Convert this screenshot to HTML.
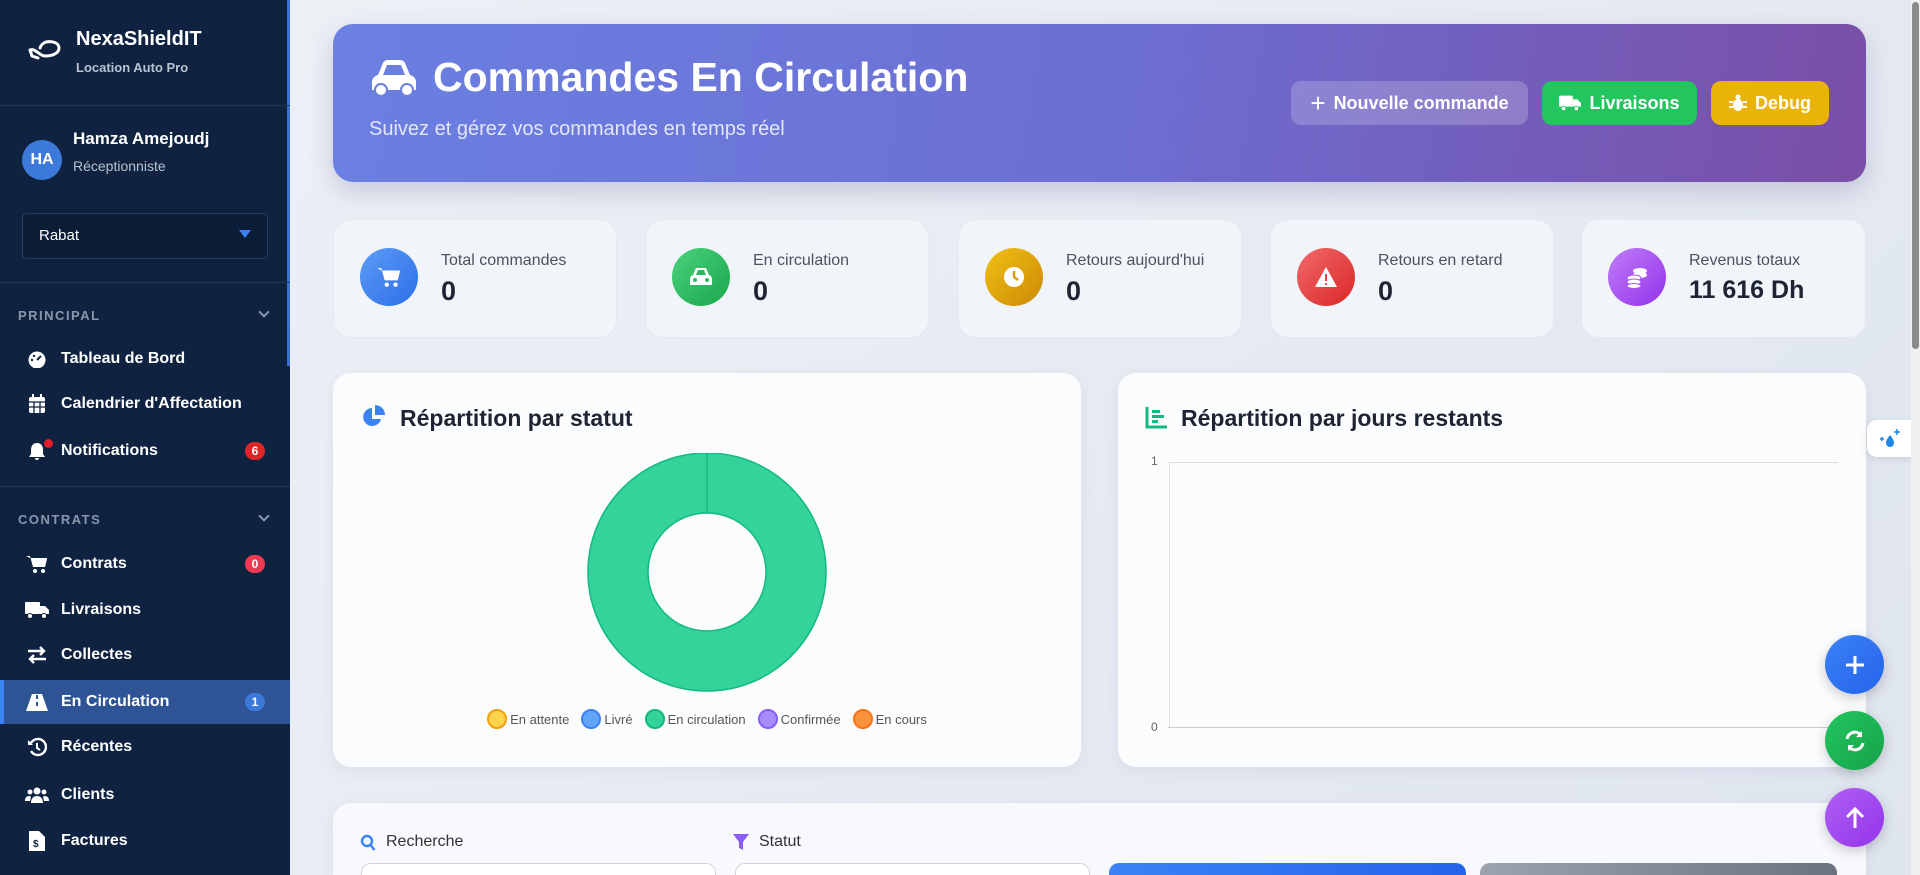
<!DOCTYPE html>
<html style="width:1920px;height:875px;overflow:hidden"><head><meta charset="utf-8"><style>
*{box-sizing:border-box;margin:0;padding:0}
body{width:1920px;height:875px;overflow:hidden;font-family:"Liberation Sans",sans-serif;background:linear-gradient(135deg,#eef1f6,#dfe5ef);position:relative}
.sb{position:absolute;left:0;top:0;width:290px;height:875px;background:#0f2341;color:#fff}
.sb .thumb{position:absolute;right:0;top:0;width:3px;height:366px;background:#3b6fd0}
.hr{position:absolute;left:0;width:290px;height:1px;background:#1f3657}
.abs{position:absolute}
.it{position:absolute;left:0;width:290px;height:44px;display:flex;align-items:center;font-size:16px;font-weight:bold}
.it .ic{width:24px;margin-left:25px;margin-right:12px;display:flex;justify-content:center}
.it.act{background:#2f5496;border-left:4px solid #3b82f6}
.badge{position:absolute;right:25px;height:18px;min-width:20px;border-radius:9px;font-size:12px;display:flex;align-items:center;justify-content:center;padding:0 6px}
.sec{position:absolute;left:18px;font-size:13px;font-weight:bold;letter-spacing:1.5px;color:#8a97aa}
.chev{position:absolute;right:22px;width:8px;height:8px;border-right:2px solid #8a97aa;border-bottom:2px solid #8a97aa;transform:rotate(45deg)}
.card{position:absolute;background:#f1f4f9;border-radius:18px;border:1px solid #e4e9f1}
.stat .circ{position:absolute;left:26px;top:28px;width:58px;height:58px;border-radius:50%;display:flex;align-items:center;justify-content:center}
.stat .lbl{position:absolute;left:107px;top:32px;font-size:16px;color:#4a5261}
.stat .val{position:absolute;left:107px;top:56px;font-size:27px;font-weight:bold;color:#1d2433}
.btn{position:absolute;top:81px;height:44px;border-radius:10px;color:#fff;font-size:18px;font-weight:bold;display:flex;align-items:center;justify-content:center;gap:8px}
.wc{position:absolute;background:#fbfcfe;border-radius:18px;box-shadow:0 4px 14px rgba(30,50,90,.06)}
.fab{position:absolute;left:1825px;width:59px;height:59px;border-radius:50%;display:flex;align-items:center;justify-content:center;box-shadow:0 4px 12px rgba(0,0,0,.2)}
.lg{display:inline-flex;align-items:center;gap:3px;margin:0 6px;font-size:13px;color:#555}
.lg i{display:inline-block;width:20px;height:20px;border-radius:50%;border:2px solid}
</style></head><body>
<div class="sb">
  <div class="thumb"></div>
  <svg class="abs" style="left:27px;top:36px" width="36" height="28" viewBox="0 0 36 28"><path d="M3 14c6-2 9 6 15 6s14-2 14-8-8-7-13-6c-3 1-5 3-6 6" fill="none" stroke="#fff" stroke-width="3" stroke-linecap="round"/><path d="M3 14l2 6 6 2" fill="none" stroke="#fff" stroke-width="3" stroke-linecap="round"/></svg>
  <div class="abs" style="left:76px;top:28px;font-size:20px;font-weight:bold">NexaShieldIT</div>
  <div class="abs" style="left:76px;top:60px;font-size:13px;font-weight:bold;color:#b8c2d0">Location Auto Pro</div>
  <div class="hr" style="top:105px"></div>
  <div class="abs" style="left:22px;top:140px;width:40px;height:40px;border-radius:50%;background:#3b7ad8;font-size:16px;font-weight:bold;display:flex;align-items:center;justify-content:center">HA</div>
  <div class="abs" style="left:73px;top:129px;font-size:17px;font-weight:bold">Hamza Amejoudj</div>
  <div class="abs" style="left:73px;top:158px;font-size:14px;color:#b8c2d0">Réceptionniste</div>
  <div class="abs" style="left:22px;top:213px;width:246px;height:46px;border:1px solid #2a3e5c;border-radius:5px;background:#0c1d37;font-size:15px;padding:13px 16px">Rabat<span style="position:absolute;right:16px;top:16px;border-left:6px solid transparent;border-right:6px solid transparent;border-top:8px solid #3b82f6"></span></div>
  <div class="hr" style="top:282px"></div>
  <div class="sec" style="top:308px">PRINCIPAL</div><div class="chev" style="top:308px"></div>
  <div class="it" style="top:337px"><span class="ic"><svg width="20" height="18" viewBox="0 0 20 18"><circle cx="10" cy="10" r="8.5" fill="#fff"/><path d="M10 10l4-4" stroke="#0f2341" stroke-width="2"/><circle cx="5" cy="10" r="1.2" fill="#0f2341"/><circle cx="7" cy="6" r="1.2" fill="#0f2341"/></svg></span>Tableau de Bord</div>
  <div class="it" style="top:382px"><span class="ic"><svg width="18" height="20" viewBox="0 0 18 20"><rect x="1" y="3" width="16" height="16" rx="2" fill="#fff"/><rect x="4" y="0" width="2" height="5" fill="#fff"/><rect x="12" y="0" width="2" height="5" fill="#fff"/><path d="M1 8h16M1 13h16M6 8v11M12 8v11" stroke="#0f2341" stroke-width="1.3"/></svg></span>Calendrier d'Affectation</div>
  <div class="it" style="top:429px"><span class="ic" style="position:relative"><svg width="20" height="20" viewBox="0 0 20 20"><path d="M10 2c4 0 6 3 6 7v4l2 3H2l2-3V9c0-4 2-7 6-7zM8 17h4a2 2 0 01-4 0z" fill="#fff"/></svg><span style="position:absolute;right:-4px;top:-2px;width:9px;height:9px;border-radius:50%;background:#e11d2a"></span></span>Notifications<span class="badge" style="background:#dc2626">6</span></div>
  <div class="hr" style="top:486px"></div>
  <div class="sec" style="top:512px">CONTRATS</div><div class="chev" style="top:512px"></div>
  <div class="it" style="top:542px"><span class="ic"><svg width="22" height="20" viewBox="0 0 22 20"><path d="M0 2h4l3 11h12l2-8H6" fill="#fff"/><path d="M5 4h16l-2 9H8z" fill="#fff"/><circle cx="9" cy="17" r="2" fill="#fff"/><circle cx="17" cy="17" r="2" fill="#fff"/></svg></span>Contrats<span class="badge" style="background:#ef3b52">0</span></div>
  <div class="it" style="top:588px"><span class="ic"><svg width="24" height="18" viewBox="0 0 24 18"><rect x="0" y="1" width="15" height="12" rx="1" fill="#fff"/><path d="M15 5h5l4 4v4h-9z" fill="#fff"/><circle cx="5" cy="15" r="2.5" fill="#fff" stroke="#0f2341"/><circle cx="19" cy="15" r="2.5" fill="#fff" stroke="#0f2341"/></svg></span>Livraisons</div>
  <div class="it" style="top:633px"><span class="ic"><svg width="22" height="18" viewBox="0 0 22 18"><path d="M2 5h16M14 1l4 4-4 4M20 13H4M8 9l-4 4 4 4" stroke="#fff" stroke-width="2.4" fill="none"/></svg></span>Collectes</div>
  <div class="it act" style="top:680px"><span class="ic" style="margin-left:21px"><svg width="22" height="18" viewBox="0 0 22 18"><path d="M6 1h10l6 17H0z" fill="#fff"/><rect x="10" y="2" width="2" height="4" fill="#2f5496"/><rect x="10" y="9" width="2" height="4" fill="#2f5496"/></svg></span>En Circulation<span class="badge" style="background:#3b7ad8">1</span></div>
  <div class="it" style="top:725px"><span class="ic"><svg width="20" height="20" viewBox="0 0 20 20"><path d="M4 6a8 8 0 110 8" fill="none" stroke="#fff" stroke-width="2.4"/><path d="M1 3v5h5z" fill="#fff"/><path d="M10 6v5l3 2" stroke="#fff" stroke-width="2" fill="none"/></svg></span>Récentes</div>
  <div class="it" style="top:773px"><span class="ic"><svg width="24" height="18" viewBox="0 0 24 18"><circle cx="12" cy="5" r="3.5" fill="#fff"/><circle cx="5" cy="6" r="2.5" fill="#fff"/><circle cx="19" cy="6" r="2.5" fill="#fff"/><path d="M6 17c0-5 3-7 6-7s6 2 6 7zM0 15c0-4 2-5 5-5l1 1-1 4zM24 15c0-4-2-5-5-5l-1 1 1 4z" fill="#fff"/></svg></span>Clients</div>
  <div class="it" style="top:819px"><span class="ic"><svg width="16" height="20" viewBox="0 0 16 20"><path d="M0 0h10l6 6v14H0z" fill="#fff"/><text x="4" y="16" font-size="10" font-weight="bold" fill="#0f2341" font-family="Liberation Sans">$</text></svg></span>Factures</div>
</div>

<div class="abs" style="left:333px;top:24px;width:1533px;height:158px;border-radius:20px;background:linear-gradient(100deg,#6b80e2 0%,#6c6fd3 50%,#7a4ea6 100%);box-shadow:0 10px 25px rgba(60,60,120,.2)">
  <svg class="abs" style="left:35px;top:35px" width="52" height="40" viewBox="0 0 52 40"><path d="M10 16l5-12c1-2 3-3 5-3h12c2 0 4 1 5 3l5 12c4 1 6 4 6 7v8H4v-8c0-3 2-6 6-7z" fill="#fff"/><path d="M15 16l4-10h14l4 10z" fill="#6b7fe0"/><circle cx="13" cy="31" r="6" fill="#fff" stroke="#6b7fe0" stroke-width="2"/><circle cx="39" cy="31" r="6" fill="#fff" stroke="#6b7fe0" stroke-width="2"/></svg>
  <div class="abs" style="left:100px;top:30px;font-size:41px;font-weight:bold;color:#fff">Commandes En Circulation</div>
  <div class="abs" style="left:36px;top:94px;font-size:20px;color:#e4e6fb">Suivez et gérez vos commandes en temps réel</div>
</div>
<div class="btn" style="left:1291px;width:237px;background:rgba(255,255,255,.2)"><span style="font-size:26px;font-weight:normal">+</span>Nouvelle commande</div>
<div class="btn" style="left:1542px;width:155px;background:#22c55e"><svg width="22" height="18" viewBox="0 0 24 18"><rect x="0" y="1" width="15" height="12" rx="1" fill="#fff"/><path d="M15 5h5l4 4v4h-9z" fill="#fff"/><circle cx="5" cy="15" r="2.5" fill="#fff" stroke="#22c55e"/><circle cx="19" cy="15" r="2.5" fill="#fff" stroke="#22c55e"/></svg>Livraisons</div>
<div class="btn" style="left:1711px;width:118px;background:#eab308"><svg width="18" height="18" viewBox="0 0 18 18"><circle cx="9" cy="3" r="2.5" fill="#fff"/><ellipse cx="9" cy="11" rx="5" ry="6" fill="#fff"/><path d="M0 8h4M14 8h4M0 13h4M14 13h4" stroke="#fff" stroke-width="2"/></svg>Debug</div>

<div class="card stat" style="left:333px;top:219px;width:284px;height:119px"><div class="circ" style="background:linear-gradient(135deg,#5b9cf7,#2d6ee6)"><svg width="24" height="22" viewBox="0 0 22 20"><path d="M0 2h4l3 11h12l2-8H6" fill="#fff"/><path d="M5 4h16l-2 9H8z" fill="#fff"/><circle cx="9" cy="17" r="2" fill="#fff"/><circle cx="17" cy="17" r="2" fill="#fff"/></svg></div><div class="lbl">Total commandes</div><div class="val">0</div></div>
<div class="card stat" style="left:645px;top:219px;width:284px;height:119px"><div class="circ" style="background:linear-gradient(135deg,#4ad17c,#1aa74d)"><svg width="24" height="22" viewBox="0 0 24 22"><path d="M4 9l3-7h10l3 7c2 1 3 2 3 4v6H1v-6c0-2 1-3 3-4z" fill="#fff"/><path d="M7 9l2-5h6l2 5z" fill="#2bb85f"/><circle cx="6" cy="14" r="2" fill="#2bb85f"/><circle cx="18" cy="14" r="2" fill="#2bb85f"/></svg></div><div class="lbl">En circulation</div><div class="val">0</div></div>
<div class="card stat" style="left:958px;top:219px;width:284px;height:119px"><div class="circ" style="background:linear-gradient(135deg,#f0c014,#cc8a05)"><svg width="24" height="24" viewBox="0 0 24 24"><circle cx="12" cy="12" r="10" fill="#fff"/><path d="M12 6v6l4 3" stroke="#d89a08" stroke-width="2.4" fill="none"/></svg></div><div class="lbl">Retours aujourd'hui</div><div class="val">0</div></div>
<div class="card stat" style="left:1270px;top:219px;width:284px;height:119px"><div class="circ" style="background:linear-gradient(135deg,#f26a6a,#d92626)"><svg width="24" height="22" viewBox="0 0 24 22"><path d="M12 1l11 20H1z" fill="#fff"/><rect x="11" y="8" width="2" height="7" fill="#e04040"/><rect x="11" y="17" width="2" height="2" fill="#e04040"/></svg></div><div class="lbl">Retours en retard</div><div class="val">0</div></div>
<div class="card stat" style="left:1581px;top:219px;width:285px;height:119px"><div class="circ" style="background:linear-gradient(135deg,#c07cf8,#9333ea)"><svg width="24" height="24" viewBox="0 0 24 24"><ellipse cx="15" cy="6" rx="7" ry="3" fill="#fff"/><ellipse cx="15" cy="10" rx="7" ry="3" fill="#fff"/><ellipse cx="9" cy="13" rx="7" ry="3" fill="#fff" stroke="#a855f7"/><ellipse cx="9" cy="17" rx="7" ry="3" fill="#fff" stroke="#a855f7"/><ellipse cx="9" cy="21" rx="7" ry="2.5" fill="#fff" stroke="#a855f7"/></svg></div><div class="lbl">Revenus totaux</div><div class="val" style="font-size:25px">11 616 Dh</div></div>

<div class="wc" style="left:333px;top:373px;width:748px;height:394px">
  <svg class="abs" style="left:29px;top:32px" width="24" height="24" viewBox="0 0 24 24"><path d="M10 3a9 9 0 109 11h-9z" fill="#3b82f6"/><path d="M13 0a10 10 0 0110 10H13z" fill="#3b82f6"/></svg>
  <div class="abs" style="left:67px;top:32px;font-size:23px;font-weight:bold;color:#1d2433">Répartition par statut</div>
  <svg class="abs" style="left:254px;top:80px" width="240" height="240" viewBox="0 0 240 240"><circle cx="120" cy="119" r="89" fill="none" stroke="#34d399" stroke-width="60"/><circle cx="120" cy="119" r="119" fill="none" stroke="#10b981" stroke-width="1.5"/><circle cx="120" cy="119" r="59" fill="#fbfcfe" stroke="#10b981" stroke-width="1.5"/><path d="M120 0v60" stroke="#10b981" stroke-width="1.5"/></svg>
  <div class="abs" style="left:0;top:336px;width:748px;text-align:center">
    <span class="lg"><i style="background:#fcd34d;border-color:#f59e0b"></i>En attente</span><span class="lg"><i style="background:#60a5fa;border-color:#3b82f6"></i>Livré</span><span class="lg"><i style="background:#34d399;border-color:#10b981"></i>En circulation</span><span class="lg"><i style="background:#a78bfa;border-color:#8b5cf6"></i>Confirmée</span><span class="lg"><i style="background:#fb923c;border-color:#f97316"></i>En cours</span>
  </div>
</div>
<div class="wc" style="left:1118px;top:373px;width:748px;height:394px">
  <svg class="abs" style="left:27px;top:32px" width="24" height="24" viewBox="0 0 24 24"><path d="M2 2v20h20" stroke="#10b981" stroke-width="3" fill="none"/><rect x="7" y="5" width="8" height="3" fill="#10b981"/><rect x="7" y="10" width="12" height="3" fill="#10b981"/><rect x="7" y="15" width="6" height="3" fill="#10b981"/></svg>
  <div class="abs" style="left:63px;top:32px;font-size:23px;font-weight:bold;color:#1d2433">Répartition par jours restants</div>
  <div class="abs" style="left:33px;top:81px;font-size:12px;color:#666">1</div>
  <div class="abs" style="left:33px;top:347px;font-size:12px;color:#666">0</div>
  <div class="abs" style="left:50px;top:89px;width:670px;height:1px;background:#ddd"></div>
  <div class="abs" style="left:50px;top:354px;width:670px;height:1px;background:#ccc"></div>
  <div class="abs" style="left:51px;top:89px;width:1px;height:265px;background:#e2e2e2"></div>
</div>

<div class="wc" style="left:333px;top:803px;width:1533px;height:72px;background:#f8f9fc;border-radius:18px 18px 0 0">
  <svg class="abs" style="left:27px;top:31px" width="16" height="18" viewBox="0 0 16 18"><circle cx="7" cy="7" r="5" fill="none" stroke="#3b82f6" stroke-width="2.4"/><path d="M10.5 11l4 5" stroke="#3b82f6" stroke-width="2.4"/></svg>
  <div class="abs" style="left:53px;top:30px;font-size:16px;color:#333">Recherche</div>
  <svg class="abs" style="left:400px;top:31px" width="16" height="16" viewBox="0 0 16 16"><path d="M0 0h16l-6 8v8l-4-2V8z" fill="#8b5cf6"/></svg>
  <div class="abs" style="left:426px;top:30px;font-size:16px;color:#333">Statut</div>
  <div class="abs" style="left:28px;top:60px;width:355px;height:12px;border:1px solid #d1d5db;border-bottom:none;border-radius:10px 10px 0 0;background:#fff"></div>
  <div class="abs" style="left:402px;top:60px;width:355px;height:12px;border:1px solid #d1d5db;border-bottom:none;border-radius:10px 10px 0 0;background:#fff"></div>
  <div class="abs" style="left:776px;top:60px;width:357px;height:12px;border-radius:10px 10px 0 0;background:linear-gradient(90deg,#3b82f6,#2563eb)"></div>
  <div class="abs" style="left:1147px;top:60px;width:357px;height:12px;border-radius:10px 10px 0 0;background:linear-gradient(90deg,#9ca3af,#6b7280)"></div>
</div>

<div class="abs" style="left:1867px;top:420px;width:45px;height:37px;background:#fff;border-radius:10px 0 0 10px;box-shadow:0 2px 8px rgba(0,0,0,.1);display:flex;align-items:center;justify-content:center"><svg width="22" height="22" viewBox="0 0 22 22"><path d="M11 7c3 4 4 6 4 8a4 4 0 01-8 0c0-2 1-4 4-8z" fill="#1e88e5"/><path d="M18 1v6M15 4h6M3 9v4M1 11h4" stroke="#1e88e5" stroke-width="1.5"/></svg></div>
<div class="fab" style="top:635px;background:linear-gradient(135deg,#3b82f6,#2563eb)"><svg width="22" height="22"><path d="M11 2v18M2 11h18" stroke="#fff" stroke-width="3"/></svg></div>
<div class="fab" style="top:711px;background:linear-gradient(135deg,#22c55e,#16a34a)"><svg width="24" height="24" viewBox="0 0 24 24"><path d="M4 10a8 8 0 0114-4M20 14a8 8 0 01-14 4" stroke="#fff" stroke-width="3" fill="none"/><path d="M19 2v6h-6zM5 22v-6h6z" fill="#fff"/></svg></div>
<div class="fab" style="top:788px;background:linear-gradient(135deg,#b061f5,#9333ea)"><svg width="22" height="24"><path d="M11 22V4M3 11l8-8 8 8" stroke="#fff" stroke-width="3" fill="none"/></svg></div>

<div class="abs" style="left:1911px;top:0;width:9px;height:875px;background:#f0f0f0"></div>
<div class="abs" style="left:1912px;top:2px;width:7px;height:347px;background:#8a8a8a;border-radius:4px"></div>
</body></html>
